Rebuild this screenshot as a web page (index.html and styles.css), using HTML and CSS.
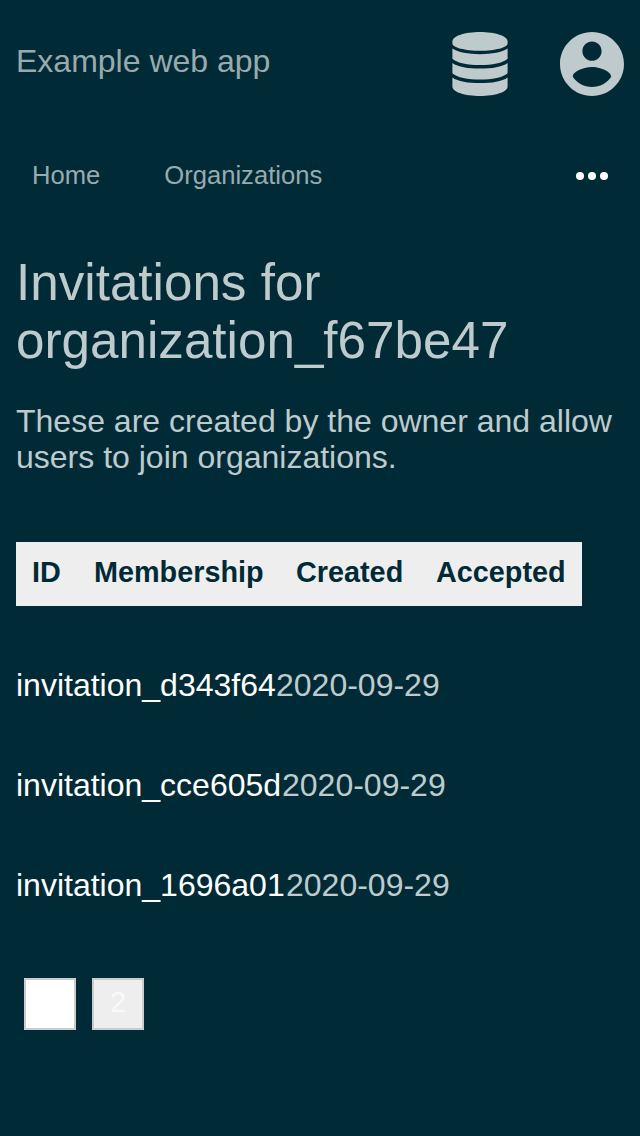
FILE: index.html
```html
<!DOCTYPE html>
<html lang="en">
<head>
<meta charset="utf-8">
<title>Example web app</title>
<link rel="stylesheet" href="styles.css">
</head>
<body>
<header class="header">
  <div class="brand">Example web app</div>
  <div class="menus">
    <svg class="icon-database" viewBox="0 0 56 64"><path d="M.4 9.500C.4 4 13 0 28 0s27.600 4 27.600 9.500v2C55.600 15.500 43 18.800 28 18.800S.4 15.500.4 11.500z"/><path d="M.4 16.600C6 20.500 16 22.200 28 22.200S50 20.500 55.600 16.600V26.700C51 31 40 33 28 33S5 31 .4 26.700z"/><path d="M.4 31C6 35 16 36.600 28 36.600S50 35 55.600 31V41.200C51 45.500 40 47.500 28 47.500S5 45.500.4 41.200z"/><path d="M.4 45.400C6 49.500 16 51 28 51S50 49.500 55.600 45.400v9.100C55.600 60 43 64 28 64S.4 60 .4 54.500z"/></svg>
    <svg class="icon-user" viewBox="2 2 20 20"><path d="M12 2C6.480 2 2 6.480 2 12s4.480 10 10 10 10-4.480 10-10S17.520 2 12 2zm0 3c1.660 0 3 1.340 3 3s-1.340 3-3 3-3-1.340-3-3 1.340-3 3-3zm0 14.200c-2.500 0-4.710-1.280-6-3.220.030-1.990 4-3.080 6-3.080 1.990 0 5.970 1.090 6 3.080-1.290 1.940-3.500 3.220-6 3.220z"/></svg>
  </div>
</header>
<nav class="nav">
  <a class="nav-link">Home</a>
  <a class="nav-link">Organizations</a>
  <svg class="icon-more" viewBox="0 0 32 8"><circle cx="4" cy="4" r="4"/><circle cx="16" cy="4" r="4"/><circle cx="28" cy="4" r="4"/></svg>
</nav>
<main class="content">
  <h1 class="title">Invitations for organization_f67be47</h1>
  <p class="intro">These are created by the owner and allow users to join organizations.</p>
  <div class="table-head"><span class="col-id">ID</span><span class="col-membership">Membership</span><span class="col-created">Created</span><span>Accepted</span></div>
  <div class="row row-first"><a class="row-link">invitation_d343f64</a><span>2020-09-29</span></div>
  <div class="row row-second"><a class="row-link">invitation_cce605d</a><span>2020-09-29</span></div>
  <div class="row row-third"><a class="row-link">invitation_1696a01</a><span>2020-09-29</span></div>
  <div class="pages"><a class="page current">1</a><a class="page">2</a></div>
</main>
</body>
</html>
```
FILE: styles.css
```css
* { box-sizing: border-box; }
body { margin: 0; min-height: 1136px; background: #002b36; color: #bfcacd; font: 32px/36px "Liberation Sans", Arial, sans-serif; }
.header { display: flex; justify-content: space-between; height: 128px; padding: 32px 16px; }
.brand { line-height: 58px; color: #99aaaf; }
.menus { display: flex; gap: 52px; }
.icon-database { width: 56px; height: 64px; fill: #bfcacd; }
.icon-user { width: 64px; height: 64px; fill: #bfcacd; }
.nav { display: flex; align-items: center; gap: 64px; height: 96px; padding: 0 32px; font-size: 25.6px; }
.nav-link { padding-bottom: 2px; color: #99aaaf; line-height: 30px; }
.icon-more { width: 32px; height: 8px; margin-left: auto; fill: #fff; }
.content { padding: 30px 16px 0; }
.title { margin: 0; font-size: 51.2px; line-height: 58px; font-weight: 400; }
.intro { margin: 33px 0 67px; }
.table-head { display: flex; width: 566px; height: 64px; padding: 0 16px; background: #eee; color: #002b36; font-size: 28.8px; font-weight: 700; line-height: 60px; }
.col-id { width: 62px; }
.col-membership { width: 202px; }
.col-created { width: 140px; }
.row { display: flex; height: 36px; margin-bottom: 64px; }
.row-first { margin-top: 61px; }
.row-link { color: #fff; }
.row-first .row-link { width: 260px; }
.row-second .row-link { width: 266px; }
.row-third .row-link { width: 270px; }
.pages { display: flex; gap: 16px; padding-left: 8px; margin-top: 75px; }
.page { width: 52px; height: 52px; border: 2px solid #ccc; background: #eee; color: #f9f9f9; font-size: 28.8px; line-height: 44px; text-align: center; }
.current { background: #fff; color: #fff; }
```
